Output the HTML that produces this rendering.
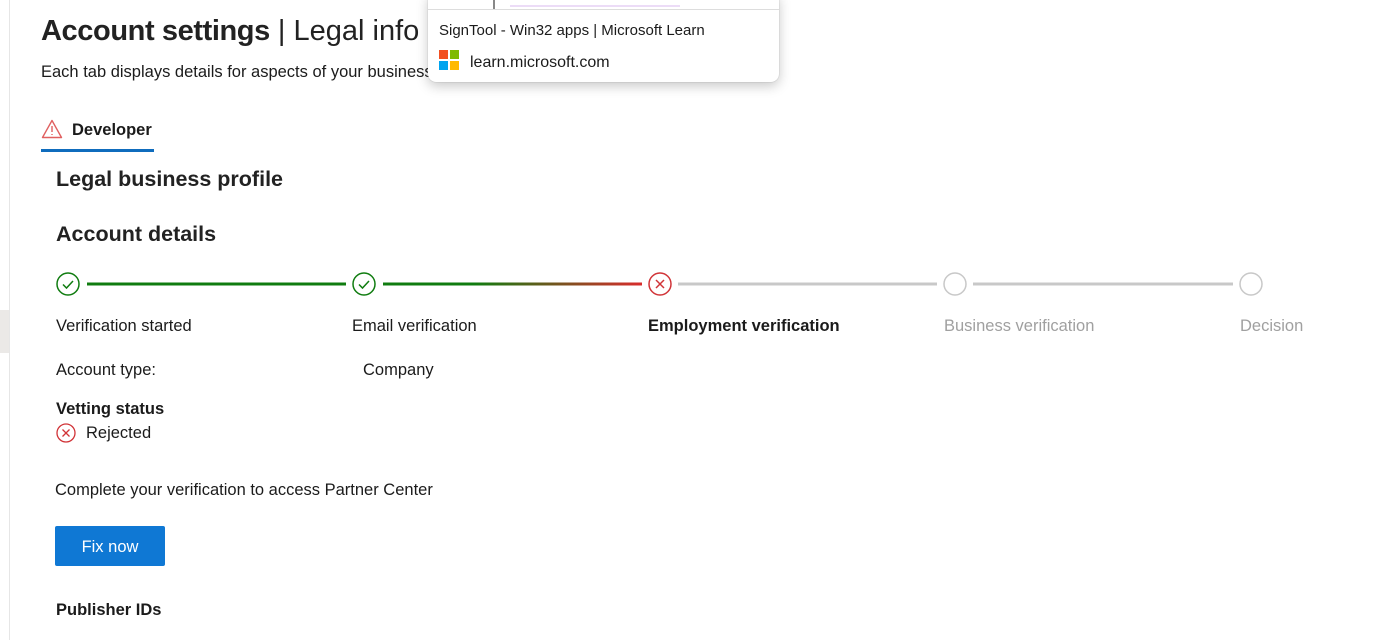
<!DOCTYPE html>
<html><head><style>
body{margin:0;width:1387px;height:640px;background:#fff;font-family:"Liberation Sans",sans-serif;color:#1b1b1b;position:relative;overflow:hidden}
.a{position:absolute;white-space:nowrap}
</style></head><body>
<div class="a" style="left:9px;top:0;width:1px;height:640px;background:#e6e6e6"></div>
<div class="a" style="left:0;top:310px;width:9px;height:43px;background:#ebe9e7"></div>
<div class="a" style="left:41px;top:15px;font-size:29px;color:#222"><span style="font-weight:bold;letter-spacing:-0.4px">Account settings</span> | Legal info</div>
<div class="a" style="left:41px;top:63px;font-size:16.5px">Each tab displays details for aspects of your business</div>
<svg class="a" style="left:41px;top:119px" width="22" height="20" viewBox="0 0 22 20"><path d="M11 1.5L20.5 18.5H1.5Z" fill="none" stroke="#e06060" stroke-width="1.4" stroke-linejoin="round"/><path d="M11 7v6M11 15v1" stroke="#e06060" stroke-width="1.4"/></svg>
<div class="a" style="left:72px;top:121px;font-size:16.5px;font-weight:bold">Developer</div>
<div class="a" style="left:41px;top:149px;width:113px;height:3px;background:#0f6cbd"></div>
<div class="a" style="left:56px;top:167px;font-size:21.5px;font-weight:bold;color:#222">Legal business profile</div>
<div class="a" style="left:56px;top:222px;font-size:21.5px;font-weight:bold;color:#222">Account details</div>
<svg class="a" style="left:0;top:260px" width="1387" height="50">
<defs><linearGradient id="g" x1="0" x2="1"><stop offset="0.35" stop-color="#107c10"/><stop offset="1" stop-color="#d92c2c"/></linearGradient></defs>
<line x1="87" y1="24" x2="346" y2="24" stroke="#107c10" stroke-width="3"/>
<rect x="383" y="22.5" width="259" height="3" fill="url(#g)"/>
<line x1="678" y1="24" x2="937" y2="24" stroke="#c8c8c8" stroke-width="3"/>
<line x1="973" y1="24" x2="1233" y2="24" stroke="#c8c8c8" stroke-width="3"/>
<circle cx="68" cy="24" r="11" fill="none" stroke="#107c10" stroke-width="1.5"/><path d="M63 24.5l3.5 3.5 6.5-7" fill="none" stroke="#107c10" stroke-width="1.5"/>
<circle cx="364" cy="24" r="11" fill="none" stroke="#107c10" stroke-width="1.5"/><path d="M359 24.5l3.5 3.5 6.5-7" fill="none" stroke="#107c10" stroke-width="1.5"/>
<circle cx="660" cy="24" r="11" fill="none" stroke="#d13438" stroke-width="1.5"/><path d="M656 20l8 8M664 20l-8 8" stroke="#d13438" stroke-width="1.5"/>
<circle cx="955" cy="24" r="11" fill="none" stroke="#c8c8c8" stroke-width="1.5"/>
<circle cx="1251" cy="24" r="11" fill="none" stroke="#c8c8c8" stroke-width="1.5"/>
</svg>
<div class="a" style="left:56px;top:317px;font-size:16.5px">Verification started</div>
<div class="a" style="left:352px;top:317px;font-size:16.5px">Email verification</div>
<div class="a" style="left:648px;top:317px;font-size:16.5px;font-weight:bold">Employment verification</div>
<div class="a" style="left:944px;top:317px;font-size:16.5px;color:#a0a0a0">Business verification</div>
<div class="a" style="left:1240px;top:317px;font-size:16.5px;color:#a0a0a0">Decision</div>
<div class="a" style="left:56px;top:361px;font-size:16.5px">Account type:</div>
<div class="a" style="left:363px;top:361px;font-size:16.5px">Company</div>
<div class="a" style="left:56px;top:400px;font-size:16.5px;font-weight:bold">Vetting status</div>
<svg class="a" style="left:55px;top:422px" width="22" height="22"><circle cx="11" cy="11" r="9" fill="none" stroke="#d13438" stroke-width="1.3"/><path d="M7.5 7.5l7 7M14.5 7.5l-7 7" stroke="#d13438" stroke-width="1.3"/></svg>
<div class="a" style="left:86px;top:424px;font-size:16.5px">Rejected</div>
<div class="a" style="left:55px;top:481px;font-size:16.5px">Complete your verification to access Partner Center</div>
<div class="a" style="left:55px;top:526px;width:110px;height:40px;background:#0f78d4;color:#fff;font-size:16.5px;line-height:43px;text-align:center;border-radius:2px">Fix now</div>
<div class="a" style="left:56px;top:601px;font-size:16.5px;font-weight:bold">Publisher IDs</div>
<div class="a" style="left:428px;top:-8px;width:351px;height:90px;background:#fff;border-radius:8px;box-shadow:0 4px 12px rgba(0,0,0,0.22),0 0 1px rgba(0,0,0,0.3)"></div>
<div class="a" style="left:428px;top:9px;width:351px;height:1px;background:#ddd"></div>
<div class="a" style="left:493px;top:0;width:2px;height:9px;background:#888"></div>
<div class="a" style="left:510px;top:5px;width:170px;height:2px;background:#ecdcf7"></div>
<div class="a" style="left:439px;top:22px;font-size:15px">SignTool - Win32 apps | Microsoft Learn</div>
<div class="a" style="left:439px;top:50px;width:9px;height:9px;background:#f25022"></div>
<div class="a" style="left:450px;top:50px;width:9px;height:9px;background:#7fba00"></div>
<div class="a" style="left:439px;top:61px;width:9px;height:9px;background:#00a4ef"></div>
<div class="a" style="left:450px;top:61px;width:9px;height:9px;background:#ffb900"></div>
<div class="a" style="left:470px;top:54px;font-size:16px">learn.microsoft.com</div>
</body></html>
